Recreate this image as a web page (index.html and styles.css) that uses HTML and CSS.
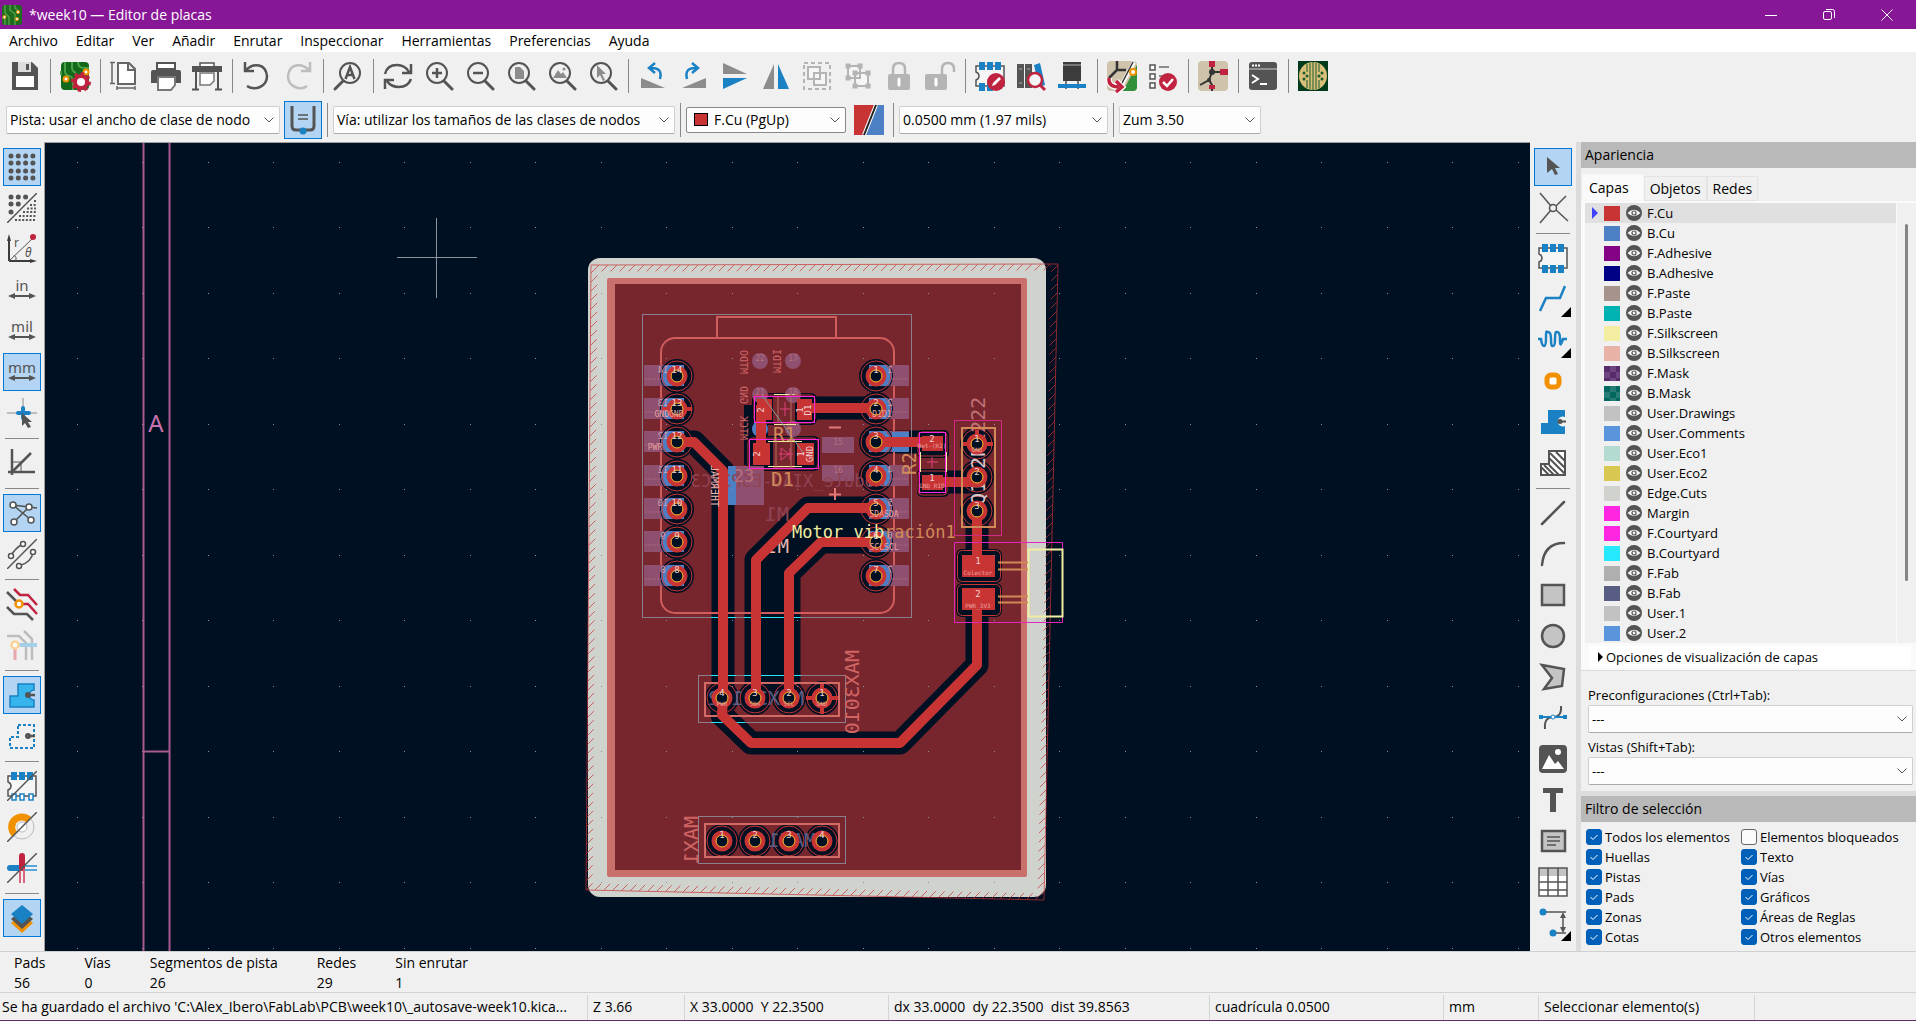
FILE: index.html
```html
<!DOCTYPE html>
<html lang="es">
<head>
<meta charset="utf-8">
<title>*week10 — Editor de placas</title>
<link rel="stylesheet" href="styles.css">
</head>
<body>
<svg class="defs" aria-hidden="true">
  <symbol id="eye" viewBox="0 0 16 16"><circle cx="8" cy="8" r="8" fill="#545454"/><path d="M1.500 8Q8 1.500 14.500 8Q8 14.500 1.500 8Z" fill="#f4f4f4"/><circle cx="8" cy="8" r="2" fill="#f4f4f4" stroke="#545454" stroke-width="1.200"/></symbol>
  <symbol id="lens" viewBox="0 0 30 30"><circle cx="13" cy="12" r="10" fill="none" stroke="#545454" stroke-width="2"/><path d="M20 20l8 8" stroke="#545454" stroke-width="3" stroke-linecap="round"/></symbol>
  <symbol id="chip" viewBox="0 0 30 30"><path d="M1 5h28v20H1v-6q3-1 3-4t-3-4z" fill="#f6f6f6" stroke="#545454" stroke-width="1.500"/><path d="M4 1h6v8H4zM12 1h6v8h-6zM20 1h6v8h-6z" fill="#1a81c4"/></symbol>
  <symbol id="slash" viewBox="0 0 30 30"><path d="M0 30L30 0" stroke="#545454" stroke-width="1.500"/></symbol>
  <symbol id="harrow" viewBox="0 0 30 30"><path d="M4 21h22" stroke="#545454" stroke-width="2"/><path d="M1 21l7-3v6zM29 21l-7-3v6z" fill="#545454"/></symbol>
</svg>

<header class="titlebar">
  <svg class="appicon" viewBox="0 0 20 20"><rect width="20" height="20" rx="3" fill="#1f6b1f"/><path d="M3 0v8l4 4v8M8 0v5l5 4v11M13 0v3l4 3M0 12l3 3v5" fill="none" stroke="#54a045" stroke-width="1.500"/><g fill="#fff" stroke="#f29100" stroke-width="1"><circle cx="2.500" cy="12" r="1.500"/><circle cx="16" cy="7" r="1.500"/><circle cx="15" cy="14" r="1.500"/></g></svg>
  <h1>*week10 — Editor de placas</h1>
  <button class="win" aria-label="Minimizar"><svg viewBox="0 0 12 12"><path d="M0 6.500h12"/></svg></button>
  <button class="win" aria-label="Restaurar"><svg viewBox="0 0 12 12"><rect x=".5" y="2.500" width="8" height="8" rx="1.500"/><path d="M3 .5h6.500q2 0 2 2V9"/></svg></button>
  <button class="win" aria-label="Cerrar"><svg viewBox="0 0 12 12"><path d="M.5.5l11 11M11.500.5l-11 11"/></svg></button>
</header>

<nav class="menubar">
  <button>Archivo</button><button>Editar</button><button>Ver</button><button>Añadir</button><button>Enrutar</button><button>Inspeccionar</button><button>Herramientas</button><button>Preferencias</button><button>Ayuda</button>
</nav>

<div class="toolbar main-tools">
  <button class="tool" aria-label="Guardar"><svg viewBox="0 0 30 30"><path d="M2 1h20l6 6v22H2z" fill="#545454"/><path d="M8 1h13v10H8z" fill="#ddd"/><path d="M16 3h3v6h-3z" fill="#545454"/><path d="M6 15h18v11H6z" fill="#fff"/></svg></button>
  <span class="sep"></span>
  <button class="tool" aria-label="Configurar placa"><svg viewBox="0 0 30 30"><rect x="1" y="1" width="28" height="28" rx="4" fill="#12691b"/><path d="M5 1v9q0 4 4 5t4 6v8M12 1v6q0 3 4 5M18 1q0 6 6 6h5M1 14v-4" fill="none" stroke="#49a045" stroke-width="2"/><g fill="#fff" stroke="#f29100" stroke-width="2"><circle cx="26" cy="11" r="2.500"/><circle cx="6" cy="18" r="2.500"/></g><circle cx="21" cy="21" r="6" fill="#fff" stroke="#c0233f" stroke-width="4"/><circle cx="21" cy="21" r="8.500" fill="none" stroke="#c0233f" stroke-width="3" stroke-dasharray="3.300 3.300"/><circle cx="21" cy="21" r="3" fill="#fff"/></svg></button>
  <span class="sep"></span>
  <button class="tool" aria-label="Configurar página"><svg viewBox="0 0 30 30" fill="none" stroke="#666" stroke-width="2"><path d="M8 2h11l6 6v15H8zM18 2v7h7" fill="#fff"/><path d="M2 1v22M0 1.500h5M0 22.500h5M7 27h18M7 25v4M25 25v4" stroke-width="1.500"/></svg></button>
  <button class="tool" aria-label="Imprimir"><svg viewBox="0 0 30 30"><path d="M6 2h18v6H6z" fill="#fff" stroke="#545454" stroke-width="2"/><path d="M0 11q0-2 2-2h26q2 0 2 2v11H0z" fill="#545454"/><path d="M7 16h17v8l-4 5H7z" fill="#fff" stroke="#777" stroke-width="2"/></svg></button>
  <button class="tool" aria-label="Trazar"><svg viewBox="0 0 30 30"><path d="M8 2h14v4H8z" fill="#fff" stroke="#545454" stroke-width="1.500"/><path d="M0 5h30v6H0z" fill="#545454"/><path d="M8 12h14v8l-4 4H8z" fill="#fff" stroke="#777" stroke-width="1.500"/><path d="M4 11v17M26 11v17M0 28.500h7M23 28.500h7" stroke="#545454" stroke-width="2"/></svg></button>
  <span class="sep"></span>
  <button class="tool" aria-label="Deshacer"><svg viewBox="0 0 30 30" fill="none" stroke="#545454" stroke-width="2.500"><path d="M3 1v9h9M4 9Q10 3 17 4.500T25 15Q25 23 18 26T5 25"/></svg></button>
  <button class="tool" aria-label="Rehacer"><svg viewBox="0 0 30 30" fill="none" stroke="#bdbdbd" stroke-width="2.500"><path d="M27 1v9h-9M26 9Q20 3 13 4.500T5 15Q5 23 12 26T24 25"/></svg></button>
  <span class="sep"></span>
  <button class="tool" aria-label="Buscar"><svg viewBox="0 0 30 30"><circle cx="17" cy="12" r="10" fill="none" stroke="#545454" stroke-width="2"/><path d="M10 20l-8 8" stroke="#545454" stroke-width="3" stroke-linecap="round"/><path d="M12.500 18L17 6l4.500 12M14 14h6" fill="none" stroke="#545454" stroke-width="2.500"/></svg></button>
  <span class="sep"></span>
  <button class="tool" aria-label="Refrescar"><svg viewBox="0 0 30 30" fill="none" stroke="#545454" stroke-width="2.500"><path d="M2 13Q4 4 14 4q8 0 12 7M28 3v9h-9M28 18q-3 8-12 8Q8 26 4 20M2 28v-9h9"/></svg></button>
  <button class="tool" aria-label="Acercar"><svg viewBox="0 0 30 30"><use href="#lens"/><path d="M8 12h10M13 7v10" stroke="#545454" stroke-width="2.500"/></svg></button>
  <button class="tool" aria-label="Alejar"><svg viewBox="0 0 30 30"><use href="#lens"/><path d="M8 12h10" stroke="#545454" stroke-width="2.500"/></svg></button>
  <button class="tool" aria-label="Ajustar página"><svg viewBox="0 0 30 30"><use href="#lens"/><path d="M9 6h5l4 4v8H9z" fill="#8c8c8c"/></svg></button>
  <button class="tool" aria-label="Ajustar objetos"><svg viewBox="0 0 30 30"><use href="#lens"/><path d="M6 17l5-8 3 4 2-2 4 6z" fill="#8c8c8c"/><circle cx="17" cy="8" r="1.500" fill="#8c8c8c"/></svg></button>
  <button class="tool" aria-label="Ajustar selección"><svg viewBox="0 0 30 30"><use href="#lens"/><path d="M9 4l9 9h-4l3 6-2 1-3-6-3 3z" fill="#8c8c8c"/></svg></button>
  <span class="sep"></span>
  <button class="tool" aria-label="Rotar izquierda"><svg viewBox="0 0 30 30"><path d="M3 17l24 10H3z" fill="#8c8c8c"/><path d="M22 18q3-12-10-11M17 2l-6 5 6 5" fill="none" stroke="#1a81c4" stroke-width="2.500"/></svg></button>
  <button class="tool" aria-label="Rotar derecha"><svg viewBox="0 0 30 30"><path d="M27 17L3 27h24z" fill="#8c8c8c"/><path d="M8 18Q5 6 18 7M13 2l6 5-6 5" fill="none" stroke="#1a81c4" stroke-width="2.500"/></svg></button>
  <button class="tool" aria-label="Reflejar vertical"><svg viewBox="0 0 30 30"><path d="M3 2l24 11H3z" fill="#8c8c8c"/><path d="M3 28l24-11H3z" fill="#1a81c4"/></svg></button>
  <button class="tool" aria-label="Reflejar horizontal"><svg viewBox="0 0 30 30"><path d="M2 28L13 3v25z" fill="#8c8c8c"/><path d="M28 28L17 3v25z" fill="#1a81c4"/></svg></button>
  <button class="tool" aria-label="Agrupar"><svg viewBox="0 0 30 30" fill="#f6f6f6" stroke="#b4b4b4" stroke-width="2"><path d="M2 2h26v26H2z" fill="none" stroke-dasharray="4 3"/><path d="M6 6h12v12H6zM12 12h12v12H12z"/></svg></button>
  <button class="tool" aria-label="Desagrupar"><svg viewBox="0 0 30 30" fill="#f6f6f6" stroke="#b4b4b4" stroke-width="2"><path d="M5 5h12v12H5zM12 12h13v13H12z"/><path d="M5 5h.1M17 5h.1M5 17h.1M25 12h.1M25 25h.1M12 25h.1M12 12h.1" stroke-width="5" stroke-linecap="square"/></svg></button>
  <button class="tool" aria-label="Bloquear"><svg viewBox="0 0 30 30"><path d="M9 14V8q0-6 6-6t6 6v6" fill="none" stroke="#b4b4b4" stroke-width="2.500"/><rect x="4" y="13" width="22" height="16" rx="2" fill="#b4b4b4"/><path d="M15 18v6" stroke="#fff" stroke-width="3" stroke-linecap="round"/></svg></button>
  <button class="tool" aria-label="Desbloquear"><svg viewBox="0 0 30 30"><path d="M17 14V8q0-6 6-6t6 6v3" fill="none" stroke="#b4b4b4" stroke-width="2.500"/><rect x="0" y="13" width="22" height="16" rx="2" fill="#b4b4b4"/><path d="M11 18v6" stroke="#fff" stroke-width="3" stroke-linecap="round"/></svg></button>
  <span class="sep"></span>
  <button class="tool" aria-label="Editor de huellas"><svg viewBox="0 0 30 30"><use href="#chip"/><path d="M4 22h6v8H4zM12 22h6v8h-6z" fill="#1a81c4"/><circle cx="21" cy="21" r="9" fill="#c0233f"/><path d="M17 25l1-3 6-6 2 2-6 6z" fill="#fff"/></svg></button>
  <button class="tool" aria-label="Biblioteca de huellas"><svg viewBox="0 0 30 30"><path d="M1 3h7v24H1zM9 3h7v24H9z" fill="#545454"/><path d="M18 4l6-2 5 22-6 2z" fill="#1a81c4"/><path d="M3 8h3M11 8h3M3 22h3" stroke="#aaa"/><circle cx="19" cy="19" r="7" fill="#f4f4f4" stroke="#c0233f" stroke-width="2.500"/><path d="M24 24l5 5" stroke="#c0233f" stroke-width="3"/></svg></button>
  <button class="tool" aria-label="Visor 3D"><svg viewBox="0 0 30 30"><path d="M6 1h18v19H6z" fill="#3c3c3c"/><path d="M6 4h18M9 20v8M21 20v8" stroke="#777" stroke-width="2"/><path d="M1 23h28v4H1z" fill="#1a81c4"/></svg></button>
  <span class="sep"></span>
  <button class="tool" aria-label="Actualizar placa"><svg viewBox="0 0 30 30"><rect width="30" height="30" rx="4" fill="#cfc3ab"/><path d="M30 4L16 30h10q4 0 4-4z" fill="#328f3a"/><path d="M10 0v9l-8 8M10 9h9" stroke="#333" stroke-width="2.500" fill="none"/><path d="M27 1L12 29" stroke="#fff" stroke-width="4"/><path d="M26 1L13 26" stroke="#333" stroke-width="1.500"/><circle cx="26" cy="11" r="3" fill="#fff" stroke="#f29100" stroke-width="2"/><path d="M2 17q-1 9 10 9M9 20l6 6-6 5" fill="none" stroke="#fff" stroke-width="6"/><path d="M2 17q-1 9 10 9M9 20l6 6-6 5" fill="none" stroke="#c0233f" stroke-width="3.500"/></svg></button>
  <button class="tool" aria-label="Verificar reglas"><svg viewBox="0 0 30 30"><path d="M2 4h5v5H2zM2 13h5v5H2zM2 22h5v5H2z" fill="#fff" stroke="#545454" stroke-width="1.500"/><path d="M11 6h10M11 15h6" stroke="#8c8c8c" stroke-width="2"/><circle cx="20" cy="21" r="9" fill="#c0233f"/><path d="M15 21l4 4 6-7" fill="none" stroke="#fff" stroke-width="2.500"/></svg></button>
  <span class="sep"></span>
  <button class="tool" aria-label="Esquema"><svg viewBox="0 0 30 30"><rect width="30" height="30" rx="4" fill="#cfc3ab"/><path d="M14 0v11l-3 8-9 5M14 11h10M11 19l3 5v6" stroke="#333" stroke-width="2" fill="none"/><path d="M11 0h6v6h-6zM22 8h8v6h-8zM11 24h6v4h-6z" fill="#c0233f"/><circle cx="14" cy="11" r="3" fill="#333"/><circle cx="11" cy="19" r="2" fill="#333"/></svg></button>
  <span class="sep"></span>
  <button class="tool" aria-label="Consola"><svg viewBox="0 0 30 30"><rect x="1" y="1" width="28" height="28" rx="3" fill="#545454"/><path d="M1 8h28" stroke="#ccc"/><path d="M4 4.500h8" stroke="#fff" stroke-width="2" stroke-dasharray="2 1"/><path d="M4 14l6 4-6 4M12 23h7" fill="none" stroke="#fff" stroke-width="2"/></svg></button>
  <span class="sep"></span>
  <button class="tool" aria-label="Complemento de fabricación"><svg viewBox="0 0 30 30"><path d="M0 0h30v30H0z" fill="#003c1c"/><circle cx="15" cy="15" r="14" fill="#d8bf78"/><g stroke="#1d5a2c" stroke-width="1" fill="none"><path d="M12 2v26M15 1v28M18 2v26M9 3v8M21 3v8M9 19v8M21 19v8"/></g><g fill="#1d5a2c"><circle cx="6" cy="12" r="1.500"/><circle cx="6" cy="18" r="1.500"/><circle cx="9" cy="15" r="1.500"/><circle cx="21" cy="15" r="1.500"/><circle cx="24" cy="12" r="1.500"/><circle cx="24" cy="18" r="1.500"/></g></svg></button>
</div>

<div class="toolbar option-tools">
  <select class="combo track" aria-label="Ancho de pista"><option>Pista: usar el ancho de clase de nodo</option></select>
  <button class="tool on" aria-label="Ancho automático"><svg viewBox="0 0 30 30"><path d="M4 1v20q0 4 4 4h14q4 0 4-4V1" fill="none" stroke="#545454" stroke-width="3"/><path d="M10 10h10M10 14h10" stroke="#545454" stroke-width="1.500"/><circle cx="15" cy="26" r="3.500" fill="#1a81c4"/></svg></button>
  <span class="sep"></span>
  <select class="combo via" aria-label="Tamaño de vía"><option>Vía: utilizar los tamaños de las clases de nodos</option></select>
  <span class="sep"></span>
  <label class="layerbox"><i class="swatch"></i><select class="combo layer" aria-label="Capa activa"><option>F.Cu (PgUp)</option></select></label>
  <button class="tool" aria-label="Par de capas"><svg viewBox="0 0 30 30"><path d="M0 0h22L10 30H0z" fill="#c83434"/><path d="M22 0h8v30H10z" fill="#4d7fc4"/><path d="M22 0L10 30" stroke="#fff" stroke-width="4"/><path d="M22 0L10 30" stroke="#222" stroke-width="2"/></svg></button>
  <span class="sep"></span>
  <select class="combo grid" aria-label="Cuadrícula"><option>0.0500 mm (1.97 mils)</option></select>
  <span class="sep"></span>
  <select class="combo zoom" aria-label="Zum"><option>Zum 3.50</option></select>
</div>

<main class="work">
  <div class="side left">
    <button class="tool on" aria-label="Mostrar cuadrícula"><svg viewBox="0 0 30 30"><path d="M4 4h24M4 11h24M4 19h24M4 26h24" stroke="#545454" stroke-width="5" stroke-linecap="round" stroke-dasharray="0 7.300"/></svg></button>
    <button class="tool" aria-label="Anular cuadrícula"><svg viewBox="0 0 30 30"><path d="M4 4h16M4 11h9M4 19h3" stroke="#545454" stroke-width="5" stroke-linecap="round" stroke-dasharray="0 7.300"/><path d="M27 8h2M23 12h6M20 15.500h9M16 19h13M12 23h17M8 27h21" stroke="#545454" stroke-width="2" stroke-dasharray="2 1.600"/><use href="#slash"/></svg></button>
    <button class="tool" aria-label="Coordenadas polares"><svg viewBox="0 0 30 30"><path d="M2 27V4M2 27h23" stroke="#3c3c3c" stroke-width="2"/><path d="M2 0l2 7H0zM30 27l-7 2v-4z" fill="#3c3c3c"/><path d="M2 27L25 5M7 21q3 2 2 6" stroke="#545454" fill="none"/><circle cx="26" cy="3" r="3" fill="#c0233f"/><text x="7" y="13" class="it">r</text><text x="18" y="23" class="it"><tspan font-style="italic">θ</tspan></text></svg></button>
    <button class="tool" aria-label="Pulgadas"><svg viewBox="0 0 30 30"><text x="15" y="16" class="unit">in</text><use href="#harrow"/></svg></button>
    <button class="tool" aria-label="Milésimas"><svg viewBox="0 0 30 30"><text x="15" y="16" class="unit">mil</text><use href="#harrow"/></svg></button>
    <button class="tool on" aria-label="Milímetros"><svg viewBox="0 0 30 30"><text x="15" y="16" class="unit">mm</text><use href="#harrow"/></svg></button>
    <button class="tool" aria-label="Forma del cursor"><svg viewBox="0 0 30 30"><path d="M16 0v14M0 15h30" stroke="#8c8c8c"/><path d="M16 10v10M11 15h11" stroke="#1a81c4" stroke-width="4" stroke-linecap="round"/><path d="M15 15l10 9h-4l3 5-3 1-3-5-3 3z" fill="#545454"/></svg></button>
    <span class="sep"></span>
    <button class="tool" aria-label="Limitar ángulos"><svg viewBox="0 0 30 30"><path d="M5 1v26M1 24h27" stroke="#545454" stroke-width="2.500"/><path d="M5 24L24 5" stroke="#545454" stroke-width="2.500"/><path d="M5 14h9v10" fill="none" stroke="#545454"/></svg></button>
    <span class="sep"></span>
    <button class="tool on" aria-label="Mostrar conexiones"><svg viewBox="0 0 30 30" stroke="#545454" fill="#fff" stroke-width="1.500"><path d="M6 7l18 15M22 9L7 24M6 7l24 3" fill="none"/><circle cx="6" cy="7" r="3"/><circle cx="22" cy="9" r="3"/><circle cx="7" cy="24" r="3"/><circle cx="24" cy="22" r="3"/></svg></button>
    <button class="tool" aria-label="Conexiones curvas"><svg viewBox="0 0 30 30" stroke="#545454" fill="#fff" stroke-width="1.500"><path d="M4 17q4-8 12-12M26 13q-1 10-14 14" fill="none"/><circle cx="4" cy="17" r="2.500"/><circle cx="16" cy="5" r="2.500"/><circle cx="26" cy="13" r="2.500"/><circle cx="12" cy="27" r="2.500"/><use href="#slash"/></svg></button>
    <span class="sep"></span>
    <button class="tool" aria-label="Contraste de capas"><svg viewBox="0 0 30 30" fill="none" stroke-width="2.500"><path d="M0 3l10 10M0 18l7 7h13l6 6" stroke="#545454"/><path d="M7 0l6 6h8l9 10M14 15h7l9 10" stroke="#c0233f"/><circle cx="12" cy="15" r="3.500" fill="#fff" stroke="#f29100"/></svg></button>
    <button class="tool" aria-label="Resaltar red"><svg viewBox="0 0 30 30" fill="none" stroke-width="2.500"><path d="M0 6h12l7 7v17M17 1l8 8v21" stroke="#bdbdbd"/><path d="M8 15h22" stroke="#a3cfe9" stroke-width="4"/><path d="M8 17v13" stroke="#e8a6b0" stroke-width="3"/><circle cx="8" cy="15" r="3.500" fill="#fff" stroke="#fbd297"/></svg></button>
    <span class="sep"></span>
    <button class="tool on" aria-label="Rellenos de zona"><svg viewBox="0 0 30 30"><path d="M11 4h16v6a5 5 0 1 0 0 10v7H3V16h8z" fill="#36b5ec" stroke="#1a81c4" stroke-width="1.500"/><circle cx="21" cy="15" r="3" fill="#545454"/><path d="M21 15h7" stroke="#545454" stroke-width="2.500"/></svg></button>
    <button class="tool" aria-label="Contornos de zona"><svg viewBox="0 0 30 30"><path d="M11 4h16v23H3V16h8z" fill="none" stroke="#1a81c4" stroke-width="2" stroke-dasharray="3 2"/><circle cx="21" cy="15" r="3" fill="#545454"/><path d="M21 15h7" stroke="#545454" stroke-width="2.500"/></svg></button>
    <span class="sep"></span>
    <button class="tool" aria-label="Pads en contorno"><svg viewBox="0 0 30 30"><use href="#chip"/><path d="M5 23h4v6H5zM13 23h4v6h-4zM22 23h4v6h-4z" fill="#fff" stroke="#1a81c4" stroke-width="1.500"/><use href="#slash"/></svg></button>
    <button class="tool" aria-label="Vías en contorno"><svg viewBox="0 0 30 30"><circle cx="15" cy="15" r="12" fill="none" stroke="#bbb"/><circle cx="15" cy="15" r="5" fill="#fff" stroke="#bbb"/><path d="M7.500 22A9 9 0 0 1 22 8" fill="none" stroke="#f29100" stroke-width="7"/><use href="#slash"/></svg></button>
    <button class="tool" aria-label="Pistas en contorno"><svg viewBox="0 0 30 30"><path d="M3 15h11" stroke="#1a81c4" stroke-width="6" stroke-linecap="round"/><path d="M15 13h15M15 17h15" stroke="#5aa5d8" stroke-width="2"/><path d="M15 3v12" stroke="#c0233f" stroke-width="6" stroke-linecap="round"/><path d="M13 16v14M17 16v14" stroke="#d9657a" stroke-width="2"/><use href="#slash"/></svg></button>
    <span class="sep"></span>
    <button class="tool on" aria-label="Mostrar apariencia"><svg viewBox="0 0 30 30"><path d="M4 20l11 10 11-10-11-9z" fill="#f29100"/><path d="M4 16l11 10 11-10-11-9z" fill="#545454"/><path d="M4 11l11 10 11-10L15 2z" fill="#1a81c4"/></svg></button>
  </div>

  <div class="canvas">
    <svg viewBox="45 143 1485 808" preserveAspectRatio="xMidYMid slice" role="img" aria-label="Placa">
      <defs>
        <pattern id="dots" x="77" y="162" width="131" height="131" patternUnits="userSpaceOnUse"><path d="M0 0h1v1H0zM65 0h1v1h-1zM0 65h1v1H0zM65 65h1v1h-1z" fill="#8a919c"/></pattern>
        <pattern id="hatch" width="9" height="9" patternUnits="userSpaceOnUse"><path d="M-1 10L10-1" stroke="#c83434"/></pattern>
        <clipPath id="zoneclip"><path d="M591 265L1058 264L1044 900L586 890Z"/></clipPath>
        <clipPath id="ringclip"><circle r="16"/></clipPath>
        <g id="clr"><circle r="17" fill="#001023"/><circle r="15" fill="none" stroke="#c83434"/></g>
        <g id="padl"><rect x="-33" y="-11" width="40" height="21" fill="#8f4f6e"/><circle r="17" fill="#001023"/><rect x="-33" y="-11" width="40" height="21" fill="#4d7fc4" clip-path="url(#ringclip)"/><circle r="15" fill="none" stroke="#c83434"/><path d="M-32 3h16" stroke="#a8677f" stroke-dasharray="2 1"/></g>
        <g id="padr"><rect x="-7" y="-11" width="40" height="21" fill="#8f4f6e"/><circle r="17" fill="#001023"/><rect x="-7" y="-11" width="40" height="21" fill="#4d7fc4" clip-path="url(#ringclip)"/><circle r="15" fill="none" stroke="#c83434"/><path d="M16 3h16" stroke="#a8677f" stroke-dasharray="2 1"/></g>
        <g id="hole"><circle r="8" fill="#001023" stroke="#c83434" stroke-width="5"/><circle r="6" fill="none" stroke="#e3b72e" stroke-width="1"/></g>
      </defs>
      <g stroke="#a85a92" stroke-width="2" fill="none"><path d="M143.500 143V951M169.500 143V951M144 751.500h25"/></g>
      <text x="156" y="432" font-size="24" fill="#c872ae" text-anchor="middle">A</text>
      <path d="M436.500 218v80M397 257.500h80" stroke="#8c929c"/>

      <rect x="588" y="258" width="458" height="639" rx="12" fill="#d0d2cd"/>
      <rect x="607" y="278" width="420" height="599" rx="2" fill="#c9706d"/>
      <rect x="615" y="284" width="406" height="586" fill="#77262d"/>
      <g opacity=".7"><path d="M591 265L1058 264L1044 900L586 890Z" fill="none" stroke="url(#hatch)" stroke-width="13" clip-path="url(#zoneclip)"/><path d="M591 265L1058 264L1044 900L586 890Z" fill="none" stroke="#c83434"/></g>

      <g fill="none" stroke="#001023" stroke-width="23" stroke-linecap="round" stroke-linejoin="round">
        <path d="M677 442h17l29 29v227l-1 17 29 28h149l77-78v-66"/>
        <path d="M876 508h-68l-52 52v138M876 542h-55l-32 31v125"/>
        <path d="M812 408h64M876 442h56M932 482h45M977 511v54"/>
      </g>
      <path d="M808 508h68v34h-55l-32 31v125h-33V560z" fill="#001023"/>
      <path d="M756 405v60" stroke="#001023" stroke-width="24"/>
      <g fill="#001023"><rect x="752" y="393" width="65" height="32" rx="6"/><rect x="746" y="436" width="74" height="35" rx="6"/><rect x="917" y="430" width="32" height="28" rx="5"/><rect x="917" y="469" width="32" height="28" rx="5"/><rect x="956" y="549" width="46" height="34" rx="6"/><rect x="956" y="583" width="46" height="34" rx="6"/></g>
      <g fill="#77262d"><rect x="773" y="397" width="22" height="26"/><rect x="773" y="440" width="22" height="28"/></g>

      <g fill="none" stroke="#d05c5c" stroke-width="2"><path d="M717 338v-21h119v21"/><rect x="661" y="338" width="233" height="275" rx="14"/></g>
      <rect x="642.500" y="314.500" width="269" height="303" fill="none" stroke="#8b7f8d"/>
      <path d="M711 617.500h25M744 617.500h57" stroke="#26e9ff"/>

      <g fill="#8f4f6e"><circle cx="760" cy="361" r="8"/><circle cx="793" cy="361" r="8"/><circle cx="760" cy="395" r="8"/><circle cx="793" cy="395" r="8"/><circle cx="760" cy="429" r="8" fill="#4d7fc4"/><circle cx="793" cy="429" r="8"/><rect x="822" y="437" width="32" height="16"/><rect x="822" y="465" width="32" height="16"/><rect x="728" y="466" width="36" height="39"/></g>
      <rect x="728" y="466" width="8" height="39" fill="#4d7fc4"/>

      <use href="#padl" transform="translate(677 376)"/><use href="#padl" transform="translate(677 409)"/><use href="#padl" transform="translate(677 442)"/><use href="#padl" transform="translate(677 476)"/><use href="#padl" transform="translate(677 509)"/><use href="#padl" transform="translate(677 542)"/><use href="#padl" transform="translate(677 576)"/>
      <use href="#padr" transform="translate(876 376)"/><use href="#padr" transform="translate(876 409)"/><use href="#padr" transform="translate(876 442)"/><use href="#padr" transform="translate(876 476)"/><use href="#padr" transform="translate(876 509)"/><use href="#padr" transform="translate(876 542)"/><use href="#padr" transform="translate(876 576)"/>
      <rect x="892" y="432" width="17" height="20" fill="#4d7fc4"/>
      <g><use href="#clr" x="722" y="698"/><use href="#clr" x="755" y="698"/><use href="#clr" x="789" y="698"/><use href="#clr" x="822" y="698"/><use href="#clr" x="722" y="841"/><use href="#clr" x="755" y="841"/><use href="#clr" x="789" y="841"/><use href="#clr" x="822" y="841"/><use href="#clr" x="977" y="444"/><use href="#clr" x="977" y="477"/><use href="#clr" x="977" y="511"/></g>
      <path d="M806 698h32M822 682v32M961 444h32M977 430v14M662 409h30" stroke="#c83434" stroke-width="4"/>

      <g fill="none" stroke="#d26a66" stroke-width="2"><rect x="705" y="683" width="134" height="33"/><rect x="705" y="824" width="134" height="33"/></g>
      <g fill="none" stroke="#8b7f8d"><rect x="698.500" y="675.500" width="147" height="47"/><rect x="698.500" y="816.500" width="147" height="47"/></g>
      <path d="M711 675.500h25M744 675.500h57M711 722.500h34" stroke="#26e9ff"/>
      <g class="mono" font-size="20" fill="#585d84"><text transform="translate(804 705) scale(-1 1)">MAX30102</text><text transform="translate(816 847) scale(-1 1)">MAX1</text></g>

      <text class="mono" font-size="20" fill="#bf7377" transform="translate(985 505) rotate(-90)"><tspan fill="#d8c8cc">Q1 2N</tspan>2222</text>
      <g class="mono" font-size="17"><text transform="translate(885 487) scale(-1 1)" fill="#8f4354">Module_XIAO-ESP32C3</text><text transform="translate(789 521) scale(-1 1)" font-size="20" fill="#8f4354">M1</text><text transform="translate(789 553) scale(-1 1)" font-size="19" fill="#ecb8b0">M1</text></g>

      <g fill="none" stroke="#c83434" stroke-width="10" stroke-linejoin="round">
        <path d="M677 442h17l29 29v227l-1 17 29 28h149l77-78v-66"/>
        <path d="M876 508h-68l-52 52v138M876 542h-55l-32 31v125"/>
        <path d="M803 408h73M876 442h56M932 482h45M977 511v54M761 405v50"/>
      </g>
      <g fill="none" stroke="#c83434"><rect x="754" y="395" width="61" height="28" rx="5"/><rect x="748" y="438" width="70" height="31" rx="5"/><rect x="918" y="432" width="29" height="24" rx="4"/><rect x="918" y="471" width="29" height="24" rx="4"/><rect x="957.500" y="550.500" width="43" height="31" rx="5"/><rect x="957.500" y="584.500" width="43" height="31" rx="5"/></g>
      <g fill="#c83434"><rect x="757" y="399" width="15" height="21"/><rect x="797" y="399" width="15" height="21"/><rect x="753" y="443" width="17" height="22"/><rect x="797" y="443" width="17" height="22"/><rect x="922" y="436" width="21" height="15"/><rect x="922" y="475" width="21" height="15"/><rect x="962" y="555" width="33" height="22"/><rect x="962" y="588" width="33" height="22"/></g>

      <use href="#hole" x="677" y="376"/><use href="#hole" x="677" y="409"/><use href="#hole" x="677" y="442"/><use href="#hole" x="677" y="476"/><use href="#hole" x="677" y="509"/><use href="#hole" x="677" y="542"/><use href="#hole" x="677" y="576"/>
      <use href="#hole" x="876" y="376"/><use href="#hole" x="876" y="409"/><use href="#hole" x="876" y="442"/><use href="#hole" x="876" y="476"/><use href="#hole" x="876" y="509"/><use href="#hole" x="876" y="542"/><use href="#hole" x="876" y="576"/>
      <g><use href="#hole" x="722" y="698"/><use href="#hole" x="755" y="698"/><use href="#hole" x="789" y="698"/><use href="#hole" x="822" y="698"/><use href="#hole" x="722" y="841"/><use href="#hole" x="755" y="841"/><use href="#hole" x="789" y="841"/><use href="#hole" x="822" y="841"/><use href="#hole" x="977" y="444"/><use href="#hole" x="977" y="477"/><use href="#hole" x="977" y="511"/></g>

      <g fill="none" stroke="#ff26e2"><rect x="754.500" y="396.500" width="60" height="26"/><rect x="749.500" y="439.500" width="69" height="29"/><rect x="919.500" y="432.500" width="26" height="60"/></g>
      <g fill="none" stroke="#cf2a86"><rect x="954.500" y="420.500" width="47" height="115"/></g>
      <path d="M954.500 622.500v-80M954.500 542.500h108v80h-108" fill="none" stroke="#e326c0"/>
      <rect x="962" y="428" width="33" height="99" fill="none" stroke="#d08a58" stroke-width="2"/>
      <rect x="1028.500" y="549.500" width="34" height="67" fill="none" stroke="#f2eda1" stroke-width="2"/>
      <path d="M998 562.500h30M998 569.500h30M998 596.500h30M998 602.500h30" stroke="#d08a58" stroke-width="2"/>
      <path d="M774 394.500h22M774 424.500h22M768 441.500h34M768 466.500h34M920.500 452v20M946.500 452v20" stroke="#f2eda1"/>
      <path d="M778 397v26M791 397v26M776 440v28M791 440v28" stroke="#b56e60"/>
      <path d="M780 409h10M785 402v14M779 454h14M781 448l8 6-8 6zM790 448v12M927 462h11M932 457v11" fill="none" stroke="#e0417c"/>
      <path d="M762 395l42 59" stroke="#7e9a9c"/>

      <g class="mono" font-size="17" fill="#f2eda1"><text x="792" y="538">Motor vib<tspan fill="#d08a58">ración1</tspan></text></g>
      <g class="mono" font-size="19" fill="#d08a58"><text x="773" y="441">R1</text><text x="771" y="486">D1</text><text transform="translate(916 475) rotate(-90)">R2</text></g>
      <g class="mono" font-size="10" fill="#d06464"><text transform="translate(740 374) scale(-1 1) rotate(-90)">MTDO</text><text transform="translate(773 373) scale(-1 1) rotate(-90)">MTDI</text><text transform="translate(740 404) scale(-1 1) rotate(-90)">GND</text><text transform="translate(740 440) scale(-1 1) rotate(-90)">MTCK</text></g>
      <text class="mono" font-size="10" fill="#ecb8b0" transform="translate(711 507) scale(-1 1) rotate(-90)">THERMAL</text>
      <g class="mono" font-size="20" fill="#d06464"><text transform="translate(859 650) scale(-1 1) rotate(90)">MAX3010</text><text transform="translate(698 816) scale(-1 1) rotate(90)">MAX1</text></g>
      <path d="M829 427.500h12M829 494.500h12M835 488v12" stroke="#e07a78" stroke-width="2"/>

      <g class="mono pin"><text x="677" y="373">14</text><text x="677" y="406">13</text><text x="677" y="439">12</text><text x="677" y="473">11</text><text x="677" y="506">10</text><text x="677" y="539">9</text><text x="677" y="573">8</text>
        <text x="876" y="373">1</text><text x="876" y="406">2</text><text x="876" y="439">3</text><text x="876" y="473">4</text><text x="876" y="506">5</text><text x="876" y="539">6</text><text x="876" y="573">7</text>
        <text x="722" y="696">4</text><text x="755" y="696">3</text><text x="789" y="696">2</text><text x="822" y="696">1</text><text x="722" y="838">1</text><text x="755" y="838">2</text><text x="789" y="838">3</text><text x="822" y="838">4</text>
        <text x="977" y="442">1</text><text x="977" y="475">2</text><text x="977" y="509">3</text><text x="978" y="564">1</text><text x="978" y="597">2</text><text x="932" y="442">2</text><text x="932" y="481">1</text></g>
      <g class="mono pin dim"><text transform="translate(663 373) scale(-1 1)">14</text><text transform="translate(663 406) scale(-1 1)">13</text><text transform="translate(663 439) scale(-1 1)">12</text><text transform="translate(663 473) scale(-1 1)">11</text><text transform="translate(663 506) scale(-1 1)">10</text><text transform="translate(663 539) scale(-1 1)">9</text><text transform="translate(663 573) scale(-1 1)">8</text><text transform="translate(890 373) scale(-1 1)">1</text><text transform="translate(890 406) scale(-1 1)">2</text><text transform="translate(890 473) scale(-1 1)">4</text><text transform="translate(890 506) scale(-1 1)">5</text><text transform="translate(890 539) scale(-1 1)">6</text><text transform="translate(890 573) scale(-1 1)">7</text></g>
      <g class="mono pin"><text transform="translate(764 410) rotate(-90)">2</text><text transform="translate(803 410) rotate(-90)">1</text><text transform="translate(811 410) rotate(-90)">D1</text><text transform="translate(760 454) rotate(-90)">2</text><text transform="translate(804 454) rotate(-90)">1</text><text transform="translate(813 454) rotate(-90)">GND</text></g>
      <g class="mono pads"><text x="760" y="361">22</text><text x="793" y="361">17</text><text x="760" y="395">21</text><text x="793" y="395">18</text><text x="838" y="445">15</text><text x="838" y="473">16</text><text x="744" y="482" class="big">23</text></g>
      <g class="mono net"><text x="978" y="575">Colector</text><text x="978" y="608">PWR_3V3</text><text x="932" y="448">Net-(R2)</text><text x="932" y="488">GND RIO</text><text x="755" y="706">SDA</text><text x="789" y="706">SCL</text><text x="822" y="706">GND</text><text x="722" y="706">PWR</text><text x="977" y="452">GND</text><text x="669" y="417" class="wide">GNDGND</text><text x="655" y="450" class="wide">PWR</text><text x="882" y="417" class="wide">D1D1</text><text x="884" y="517" class="wide">SDASDA</text><text x="884" y="550" class="wide">SCLSCL</text></g>
      <rect x="45" y="143" width="1485" height="808" fill="url(#dots)"/>
    </svg>
  </div>

  <div class="side right">
    <button class="tool on" aria-label="Seleccionar"><svg viewBox="0 0 30 30"><path d="M9 5v16l5-4 3 6 3-1-3-6h5z" fill="#545454"/></svg></button>
    <button class="tool" aria-label="Resaltar conexiones"><svg viewBox="0 0 30 30" stroke="#545454" stroke-width="1.500" fill="none"><path d="M2 0l11 13M28 3L18 13M2 30l11-13M30 28L18 17"/><circle cx="15" cy="15" r="3.500"/></svg></button>
    <span class="sep"></span>
    <button class="tool" aria-label="Huella"><svg viewBox="0 0 30 30"><use href="#chip"/><path d="M4 22h6v8H4zM12 22h6v8h-6zM20 22h6v8h-6z" fill="#1a81c4"/></svg></button>
    <button class="tool more" aria-label="Pista"><svg viewBox="0 0 30 30"><path d="M2 27l6-13h14L27 2" fill="none" stroke="#1a81c4" stroke-width="2.500"/></svg></button>
    <button class="tool more" aria-label="Meandro"><svg viewBox="0 0 30 30"><path d="M0 14h3q1 7 3 7t2-8 1-6h1q3 0 3 7t1 7h1q2 0 2-7t1-7h1q3 0 3 7t1 5 2-5h4" fill="none" stroke="#1a81c4" stroke-width="2.500"/></svg></button>
    <button class="tool" aria-label="Vía"><svg viewBox="0 0 30 30"><rect x="9" y="9" width="12" height="12" rx="4" fill="#fff" stroke="#f29100" stroke-width="5"/></svg></button>
    <button class="tool" aria-label="Zona"><svg viewBox="0 0 30 30"><path d="M10 3h17v7a5 5 0 1 0 0 9v8H3V16h7z" fill="#1a81c4"/><circle cx="22" cy="14.500" r="2.500" fill="#545454"/><path d="M22 14.500h6" stroke="#545454" stroke-width="2"/></svg></button>
    <button class="tool" aria-label="Área de reglas"><svg viewBox="0 0 30 30"><path d="M11 3h16v24H3V16h8z" fill="#fff" stroke="#545454" stroke-width="2"/><path d="M12 5l15 15M11 10l16 16M11 17l10 10M6 17l10 10M3 19l8 8M18 4l9 9" stroke="#545454" stroke-width="2"/></svg></button>
    <span class="sep"></span>
    <button class="tool" aria-label="Línea"><svg viewBox="0 0 30 30"><path d="M4 26L26 4" stroke="#545454" stroke-width="2.500" stroke-linecap="round"/></svg></button>
    <button class="tool" aria-label="Arco"><svg viewBox="0 0 30 30"><path d="M4 26Q6 4 26 4" fill="none" stroke="#545454" stroke-width="2.500" stroke-linecap="round"/></svg></button>
    <button class="tool" aria-label="Rectángulo"><svg viewBox="0 0 30 30"><rect x="4" y="5" width="22" height="20" fill="#c4c4c4" stroke="#545454" stroke-width="2.500"/></svg></button>
    <button class="tool" aria-label="Círculo"><svg viewBox="0 0 30 30"><circle cx="15" cy="15" r="11" fill="#c4c4c4" stroke="#545454" stroke-width="2.500"/></svg></button>
    <button class="tool" aria-label="Polígono"><svg viewBox="0 0 30 30"><path d="M4 3l22 4-2 17-18 3 8-11z" fill="#c4c4c4" stroke="#545454" stroke-width="2.500"/></svg></button>
    <button class="tool" aria-label="Bézier"><svg viewBox="0 0 30 30"><path d="M7 26Q6 14 15 14T23 3" fill="none" stroke="#545454" stroke-width="2"/><path d="M3 14h24" stroke="#1a81c4" stroke-width="2"/><path d="M1 12h4v4H1zM25 12h4v4h-4z" fill="#1a81c4"/><circle cx="15" cy="14" r="2" fill="#fff" stroke="#1a81c4"/></svg></button>
    <button class="tool" aria-label="Imagen"><svg viewBox="0 0 30 30"><rect x="1" y="1" width="28" height="28" rx="4" fill="#545454"/><path d="M4 25l7-14 6 9 3-3 6 8z" fill="#fff"/><circle cx="20" cy="8" r="3" fill="#fff"/></svg></button>
    <button class="tool" aria-label="Texto"><svg viewBox="0 0 30 30"><path d="M5 3h20v5h-7v19h-6V8H5z" fill="#545454"/></svg></button>
    <button class="tool" aria-label="Cuadro de texto"><svg viewBox="0 0 30 30"><rect x="4" y="5" width="23" height="20" fill="#c4c4c4" stroke="#545454" stroke-width="2.500"/><path d="M9 11h13M9 15h13M9 19h9" stroke="#545454" stroke-width="1.500"/></svg></button>
    <button class="tool" aria-label="Tabla"><svg viewBox="0 0 30 30"><path d="M1 1h28v28H1z" fill="#fff"/><path d="M1 1h28v8H1z" fill="#c4c4c4"/><path d="M1 1h28v28H1zM10 1v28M20 1v28M1 15h28M1 23h28" fill="none" stroke="#545454" stroke-width="1.500"/></svg></button>
    <button class="tool more" aria-label="Cota"><svg viewBox="0 0 30 30"><path d="M5 4h23M15 25h13M25 7v15" stroke="#545454" stroke-width="1.500"/><path d="M25 4l3 6h-6zM25 25l3-6h-6z" fill="#545454"/><circle cx="5" cy="4" r="3.500" fill="#1a81c4"/><circle cx="15" cy="25" r="3.500" fill="#1a81c4"/></svg></button>
  </div>

  <aside class="dock">
    <h2>Apariencia</h2>
    <div class="tabs" role="tablist"><button class="active" role="tab">Capas</button><button role="tab">Objetos</button><button role="tab">Redes</button></div>
    <div class="page">
      <ul class="layers">
        <li class="sel"><i style="background:#c83434"></i><svg><use href="#eye"/></svg>F.Cu</li>
        <li><i style="background:#4d7fc4"></i><svg><use href="#eye"/></svg>B.Cu</li>
        <li><i style="background:#840084"></i><svg><use href="#eye"/></svg>F.Adhesive</li>
        <li><i style="background:#000084"></i><svg><use href="#eye"/></svg>B.Adhesive</li>
        <li><i style="background:#a6948c"></i><svg><use href="#eye"/></svg>F.Paste</li>
        <li><i style="background:#00b2b2"></i><svg><use href="#eye"/></svg>B.Paste</li>
        <li><i style="background:#f2eda1"></i><svg><use href="#eye"/></svg>F.Silkscreen</li>
        <li><i style="background:#e8b2a7"></i><svg><use href="#eye"/></svg>B.Silkscreen</li>
        <li><i class="check" style="background-color:#562a6b"></i><svg><use href="#eye"/></svg>F.Mask</li>
        <li><i class="check" style="background-color:#02685f"></i><svg><use href="#eye"/></svg>B.Mask</li>
        <li><i style="background:#c2c2c2"></i><svg><use href="#eye"/></svg>User.Drawings</li>
        <li><i style="background:#5994dc"></i><svg><use href="#eye"/></svg>User.Comments</li>
        <li><i style="background:#b4dbd2"></i><svg><use href="#eye"/></svg>User.Eco1</li>
        <li><i style="background:#d8c852"></i><svg><use href="#eye"/></svg>User.Eco2</li>
        <li><i style="background:#d0d2cd"></i><svg><use href="#eye"/></svg>Edge.Cuts</li>
        <li><i style="background:#ff26e2"></i><svg><use href="#eye"/></svg>Margin</li>
        <li><i style="background:#ff26e2"></i><svg><use href="#eye"/></svg>F.Courtyard</li>
        <li><i style="background:#26e9ff"></i><svg><use href="#eye"/></svg>B.Courtyard</li>
        <li><i style="background:#afafaf"></i><svg><use href="#eye"/></svg>F.Fab</li>
        <li><i style="background:#585d84"></i><svg><use href="#eye"/></svg>B.Fab</li>
        <li><i style="background:#c2c2c2"></i><svg><use href="#eye"/></svg>User.1</li>
        <li><i style="background:#5994dc"></i><svg><use href="#eye"/></svg>User.2</li>
      </ul>
      <div class="scroll"><span></span></div>
    </div>
    <div class="optwrap"><button class="options">Opciones de visualización de capas</button></div>
    <div class="presets">
      <label for="preset">Preconfiguraciones (Ctrl+Tab):</label>
      <select id="preset" class="combo"><option>---</option></select>
      <label for="views">Vistas (Shift+Tab):</label>
      <select id="views" class="combo"><option>---</option></select>
    </div>
    <h2 class="second">Filtro de selección</h2>
    <div class="filter">
      <label><input type="checkbox" checked>Todos los elementos</label><label><input type="checkbox">Elementos bloqueados</label>
      <label><input type="checkbox" checked>Huellas</label><label><input type="checkbox" checked>Texto</label>
      <label><input type="checkbox" checked>Pistas</label><label><input type="checkbox" checked>Vías</label>
      <label><input type="checkbox" checked>Pads</label><label><input type="checkbox" checked>Gráficos</label>
      <label><input type="checkbox" checked>Zonas</label><label><input type="checkbox" checked>Áreas de Reglas</label>
      <label><input type="checkbox" checked>Cotas</label><label><input type="checkbox" checked>Otros elementos</label>
    </div>
  </aside>
</main>

<dl class="info">
  <div><dt>Pads</dt><dd>56</dd></div><div><dt>Vías</dt><dd>0</dd></div><div><dt>Segmentos de pista</dt><dd>26</dd></div><div><dt>Redes</dt><dd>29</dd></div><div><dt>Sin enrutar</dt><dd>1</dd></div>
</dl>
<footer class="status">
  <span>Se ha guardado el archivo 'C:\Alex_Ibero\FabLab\PCB\week10\_autosave-week10.kica...</span><span>Z 3.66</span><span>X 33.0000&nbsp; Y 22.3500</span><span>dx 33.0000&nbsp; dy 22.3500&nbsp; dist 39.8563</span><span>cuadrícula 0.0500</span><span>mm</span><span>Seleccionar elemento(s)</span><span></span>
</footer>
</body>
</html>
```
FILE: styles.css
```css
* { box-sizing: border-box; }
body {
  margin: 0;
  min-height: 100vh;
  display: flex;
  flex-direction: column;
  background: #f0f0f0;
  color: #000;
  font: 14px/20px "Open Sans", "Noto Sans", sans-serif;
  border-bottom: 1px solid #5e2f6b;
}
button, select, input { font: inherit; color: inherit; margin: 0; }
button { border: 0; background: none; padding: 0; }
h1, h2, ul, dl, dd { margin: 0; padding: 0; font-weight: 400; }
.defs { position: absolute; width: 0; height: 0; }

.titlebar { display: flex; align-items: center; height: 29px; background: #881798; color: #fff; padding-left: 2px; }
.appicon { width: 20px; height: 20px; margin-right: 7px; }
.titlebar h1 { flex: 1; font-size: 14px; }
.win { width: 58px; height: 29px; display: grid; place-items: center; }
.win svg { width: 12px; height: 12px; fill: none; stroke: #fff; }

.menubar { display: flex; gap: 18px; height: 23px; padding-left: 9px; background: #fff; align-items: center; }

.toolbar { display: flex; align-items: center; padding-left: 6px; }
.main-tools { height: 49px; gap: 3px; padding-bottom: 2px; }
.option-tools { height: 41px; gap: 4px; padding-bottom: 4px; }
.tool { width: 38px; height: 38px; flex: none; display: grid; place-items: center; border: 1px solid transparent; position: relative; }
.tool svg { width: 30px; height: 30px; overflow: visible; }
.tool.on { background: #b3d5f3; border-color: #0078d7; }
.tool.more::after { content: ""; position: absolute; right: 0; bottom: 0; border: 5px solid #000; border-top-color: transparent; border-left-color: transparent; }
.sep { flex: none; background: #888; }
.main-tools .sep { width: 1px; height: 34px; margin: 0 2px 0 3px; }
.option-tools .sep { width: 1px; height: 34px; margin: 0 1px; }

.combo {
  appearance: none;
  height: 28px;
  padding: 0 22px 0 3px;
  border: 1px solid #d0d0d0;
  border-bottom-color: #aaa;
  border-radius: 2px;
  background: #fdfdfd url("data:image/svg+xml,%3Csvg xmlns='http://www.w3.org/2000/svg' width='10' height='6'%3E%3Cpath d='M.5.5L5 5L9.500.5' fill='none' stroke='%23555'/%3E%3C/svg%3E") no-repeat right 5px center;
}
.track { width: 274px; }
.via { width: 342px; }
.grid { width: 209px; }
.zoom { width: 142px; }
.layerbox { position: relative; }
.layerbox .combo { width: 160px; height: 26px; padding-left: 27px; border-color: #888; display: block; }
.swatch { position: absolute; left: 8px; top: 6px; width: 14px; height: 13px; background: #c83434; border: 1px solid #000; }

.work { flex: 1; display: grid; grid-template-columns: 44px minmax(0, 1fr) 46px 340px; border-bottom: 1px solid #d0d0d0; }
.side { display: flex; flex-direction: column; gap: 3px; padding: 6px 0 0 3px; }
.side.right { padding-left: 4px; }
.side .sep { height: 1px; width: 34px; margin: 3px 0 2px 2px; }
.unit { font: 15px "Noto Sans", sans-serif; text-anchor: middle; fill: #545454; }
.it { font: 12px "Noto Sans", sans-serif; fill: #545454; }
.canvas { position: relative; background: #001023; border: 1px solid #a0a0a0; border-width: 1px 0 0 1px; min-height: 600px; }
.canvas svg { position: absolute; inset: 0; width: 100%; height: 100%; font-family: "Noto Sans", sans-serif; }
.mono { font-family: "DejaVu Sans Mono", monospace; }
.pin { fill: #f0d4d4; font-size: 9px; text-anchor: middle; }
.dim { fill: #c9a0b4; }
.pads { fill: #b5717c; font-size: 8px; text-anchor: middle; }
.big { font-size: 17px; }
.net { fill: #e8a0a0; font-size: 6px; text-anchor: middle; }
.wide { font-size: 8px; }

.dock { border-left: 5px solid #dcdcdc; display: flex; flex-direction: column; font-size: 13px; }
.dock h2 { height: 26px; background: #b9b9b9; font-size: 14px; line-height: 26px; padding-left: 4px; }
.dock .second { border-top: 5px solid #dcdcdc; height: 31px; }
.tabs { display: flex; align-items: flex-end; height: 33px; padding-left: 1px; font-size: 14px; }
.tabs button { height: 25px; padding: 0 5px; border: 1px solid #e4e4e4; }
.tabs .active { height: 27px; padding: 0 14px 0 6px; background: #fafafa; border-color: #f6f6f6; }
.page { display: flex; background: #fafafa; padding: 2px 0 0 4px; height: 442px; overflow: hidden; }
.layers { list-style: none; width: 311px; background: #f0f0f0; }
.layers li { display: flex; align-items: center; height: 20px; padding-left: 19px; position: relative; }
.layers i { width: 16px; height: 15px; margin-right: 6px; }
.layers .check { background-image: conic-gradient(#fff2 25%, #0000 0 50%, #fff2 0 75%, #0000 0); background-size: 12px 12px; }
.layers svg { width: 16px; height: 16px; margin-right: 5px; }
.sel { background: #e0e0e0; }
.sel::before { content: ""; position: absolute; left: 7px; top: 4px; border: 6px solid transparent; border-left-color: #4040ff; border-right: 0; }
.scroll { flex: 1; background: #f0f0f0; margin-left: 1px; padding: 21px 0 0 8px; }
.scroll span { display: block; width: 3px; height: 357px; background: #858585; border-radius: 2px; }
.optwrap { padding: 3px 5px 2px 8px; background: #fafafa; border-bottom: 1px solid #dcdcdc; }
.options { display: flex; align-items: center; width: 100%; height: 22px; padding-left: 9px; background: #fff; text-align: left; }
.options::before { content: ""; border: 5px solid transparent; border-left-color: #000; border-right: 0; margin-right: 3px; }
.presets { display: flex; flex-direction: column; padding: 14px 3px 2px 7px; }
.presets label { height: 20px; }
.presets .combo { width: 100%; margin-bottom: 4px; }
.filter { display: grid; grid-template-columns: 155px 1fr; padding: 5px 0 4px 5px; }
.filter label { display: flex; align-items: center; gap: 3px; height: 20px; }
.filter input { appearance: none; width: 16px; height: 16px; border: 1px solid #666; border-radius: 3px; background: #fafafa; }
.filter input:checked { border-color: #005fb8; background: #005fb8 url("data:image/svg+xml,%3Csvg xmlns='http://www.w3.org/2000/svg' width='14' height='14'%3E%3Cpath d='M3.500 7L6 9.500L10.500 5' fill='none' stroke='white'/%3E%3C/svg%3E") center; }

.info { display: flex; gap: 39px; height: 41px; padding: 1px 0 0 14px; border-bottom: 1px solid #d4d4d4; }
.status { display: grid; grid-template-columns: 587px 97px 204px 321px 234px 95px 216px 1fr; height: 27px; padding-top: 2px; line-height: 24px; white-space: nowrap; }
.status span { padding-left: 5px; border-left: 1px solid #d4d4d4; overflow: hidden; }
.status span:first-child { padding-left: 2px; border: 0; }
```
